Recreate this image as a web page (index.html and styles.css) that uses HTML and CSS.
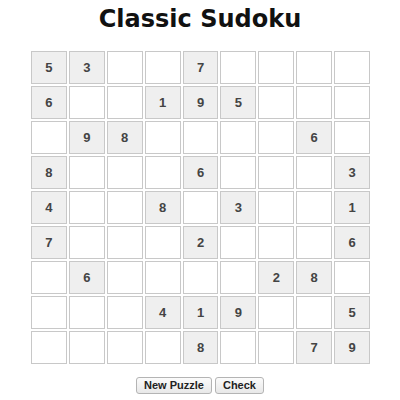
FILE: index.html
```html
<!DOCTYPE html>
<html>
<head>
<meta charset="utf-8">
<link rel="stylesheet" href="styles.css">
</head>
<body>
<h1 class="title">Classic Sudoku</h1>
<div class="board">
<div class="cell given">5</div><div class="cell given">3</div><div class="cell"></div><div class="cell"></div><div class="cell given">7</div><div class="cell"></div><div class="cell"></div><div class="cell"></div><div class="cell"></div>
<div class="cell given">6</div><div class="cell"></div><div class="cell"></div><div class="cell given">1</div><div class="cell given">9</div><div class="cell given">5</div><div class="cell"></div><div class="cell"></div><div class="cell"></div>
<div class="cell"></div><div class="cell given">9</div><div class="cell given">8</div><div class="cell"></div><div class="cell"></div><div class="cell"></div><div class="cell"></div><div class="cell given">6</div><div class="cell"></div>
<div class="cell given">8</div><div class="cell"></div><div class="cell"></div><div class="cell"></div><div class="cell given">6</div><div class="cell"></div><div class="cell"></div><div class="cell"></div><div class="cell given">3</div>
<div class="cell given">4</div><div class="cell"></div><div class="cell"></div><div class="cell given">8</div><div class="cell"></div><div class="cell given">3</div><div class="cell"></div><div class="cell"></div><div class="cell given">1</div>
<div class="cell given">7</div><div class="cell"></div><div class="cell"></div><div class="cell"></div><div class="cell given">2</div><div class="cell"></div><div class="cell"></div><div class="cell"></div><div class="cell given">6</div>
<div class="cell"></div><div class="cell given">6</div><div class="cell"></div><div class="cell"></div><div class="cell"></div><div class="cell"></div><div class="cell given">2</div><div class="cell given">8</div><div class="cell"></div>
<div class="cell"></div><div class="cell"></div><div class="cell"></div><div class="cell given">4</div><div class="cell given">1</div><div class="cell given">9</div><div class="cell"></div><div class="cell"></div><div class="cell given">5</div>
<div class="cell"></div><div class="cell"></div><div class="cell"></div><div class="cell"></div><div class="cell given">8</div><div class="cell"></div><div class="cell"></div><div class="cell given">7</div><div class="cell given">9</div>
</div>
<div class="controls">
<button class="btn">New Puzzle</button>
<button class="btn">Check</button>
</div>
</body>
</html>
```
FILE: styles.css
```css
html, body {
  margin: 0;
  padding: 0;
  background: #fff;
}
body {
  width: 400px;
  height: 400px;
  overflow: hidden;
  font-family: "Liberation Sans", Arial, sans-serif;
}
.title {
  margin: 3px 0 0 0;
  height: 48px;
  text-align: center;
  font-family: "DejaVu Sans", sans-serif;
  font-weight: 700;
  font-size: 24px;
  line-height: 32px;
  color: #111;
}
.board {
  width: 339px;
  margin: 0 0 0 31px;
  display: grid;
  grid-template-columns: repeat(9, 1fr);
  grid-auto-rows: 33px;
  gap: 2px;
}
.cell {
  border: 1px solid #c8c8c8;
  background: #fff;
  display: flex;
  align-items: center;
  justify-content: center;
  font-size: 13px;
  font-weight: 700;
  color: #444;
}
.cell.given {
  background: #efefef;
}
.controls {
  display: flex;
  justify-content: center;
  gap: 3px;
  margin-top: 13px;
}
.btn {
  font-family: "Liberation Sans", Arial, sans-serif;
  font-size: 11px;
  font-weight: 700;
  color: #222;
  background: linear-gradient(#fbfbfb, #e8e8e8);
  border: 1px solid #b4b4b4;
  border-radius: 3px;
  padding: 1px 7px;
  height: 17px;
  line-height: 13px;
}
```
